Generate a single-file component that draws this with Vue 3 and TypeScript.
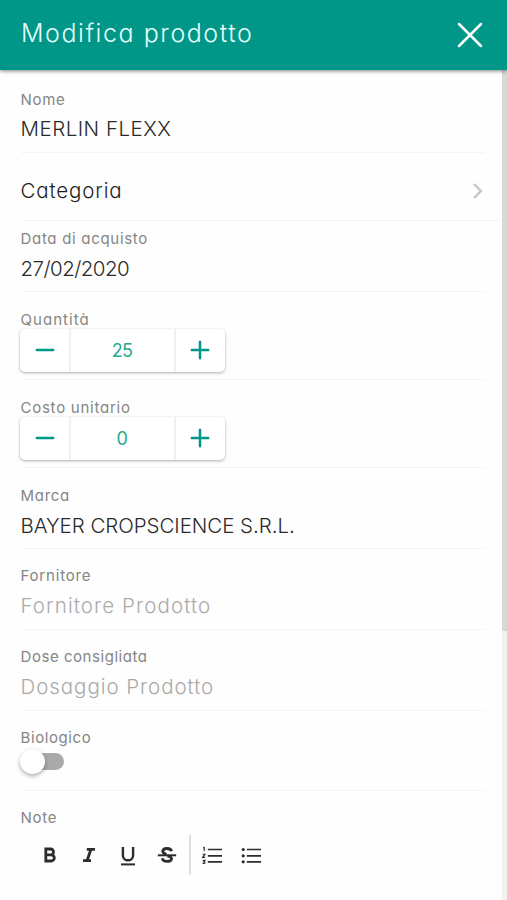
<script setup lang="ts">
import { ref } from 'vue'

interface Counter {
  id: string
  label: string
  value: number
}

const nome = ref('MERLIN FLEXX')
const acquisto = ref('27/02/2020')
const marca = ref('BAYER CROPSCIENCE S.R.L.')
const biologico = ref(false)
const counters = ref<Counter[]>([
  { id: 'quantita', label: 'Quantità', value: 25 },
  { id: 'costo', label: 'Costo unitario', value: 0 },
])

function step(counter: Counter, delta: number): void {
  counter.value = Math.max(0, counter.value + delta)
}
</script>

<template>
  <div class="page">
    <header class="header">
      <h1 class="title">Modifica prodotto</h1>
      <svg class="close" width="26" height="26" viewBox="0 0 26 26">
        <path d="M2 2L24 24M24 2L2 24" />
      </svg>
    </header>

    <div class="body">
      <main class="form">
        <section class="field nome">
          <div class="label">Nome</div>
          <div class="value v-nome">{{ nome }}</div>
        </section>

        <section class="field categoria">
          <div class="value v-categoria">Categoria</div>
          <svg class="chevron" width="12" height="18" viewBox="0 0 12 18">
            <path d="M2 2L9 9L2 16" />
          </svg>
        </section>

        <section class="field data">
          <div class="label">Data di acquisto</div>
          <div class="value v-data">{{ acquisto }}</div>
        </section>

        <section v-for="c in counters" :key="c.id" class="field counter">
          <div class="label" :class="'l-' + c.id">{{ c.label }}</div>
          <div class="stepper">
            <button class="step" @click="step(c, -1)">
              <svg width="20" height="20" viewBox="0 0 20 20"><path d="M1.8 10H18.2" /></svg>
            </button>
            <div class="count">{{ c.value }}</div>
            <button class="step" @click="step(c, 1)">
              <svg width="20" height="20" viewBox="0 0 20 20"><path d="M1.8 10H18.2M10 1.8V18.2" /></svg>
            </button>
          </div>
        </section>

        <section class="field marca">
          <div class="label">Marca</div>
          <div class="value v-marca">{{ marca }}</div>
        </section>

        <section class="field fornitore">
          <div class="label l-fornitore">Fornitore</div>
          <div class="value hint v-fornitore">Fornitore Prodotto</div>
        </section>

        <section class="field dose">
          <div class="label l-dose">Dose consigliata</div>
          <div class="value hint">Dosaggio Prodotto</div>
        </section>

        <section class="field bio">
          <div class="label l-bio">Biologico</div>
          <div class="toggle" :class="{ on: biologico }" @click="biologico = !biologico">
            <span class="knob"></span>
          </div>
        </section>

        <section class="field note">
          <div class="label">Note</div>
          <div class="toolbar">
            <svg class="tool" width="24" height="24" viewBox="0 0 24 24">
              <path class="bold" d="M7.8 6H12.6A2.9 2.9 0 0 1 12.6 11.8H7.8ZM7.8 11.8H13.2A3.1 3.1 0 0 1 13.2 18H7.8Z" />
            </svg>
            <svg class="tool" width="24" height="24" viewBox="0 0 24 24">
              <path class="bold" d="M9.8 6.3H18M6 17.7H14M13.9 6.5L10.1 17.5" />
            </svg>
            <svg class="tool" width="24" height="24" viewBox="0 0 24 24">
              <path class="under" d="M6.9 4V12.2A5.1 5.1 0 0 0 17.1 12.2V4" />
              <path d="M5 21.4H19" />
            </svg>
            <svg class="tool" width="24" height="24" viewBox="0 0 24 24">
              <path class="bold" d="M16.5 8.2C15.6 4.4 7.8 4.8 7.8 8.3C7.8 9.8 9.3 10.8 11.5 11.4M12.5 12.8C15 13.5 16.6 14 16.6 15.8C16.6 19.2 8.2 19.6 7.3 15.2" />
              <path d="M2.8 12.3H21.2" />
            </svg>
            <span class="divider"></span>
            <svg class="tool" width="24" height="24" viewBox="0 0 24 24">
              <path class="bar" d="M7.8 6.5H22M7.8 12.8H22M7.8 18.8H22" />
              <path class="num" d="M3 5L4.2 4.4V8.2M2.6 11.2H5L2.6 14.4H5.2M2.6 17.2H5L3.8 18.6C5.6 18.8 5.2 20.4 4.2 20.4H2.6" />
            </svg>
            <svg class="tool" width="24" height="24" viewBox="0 0 24 24">
              <path class="bar" d="M7.8 6.5H22M7.8 12.8H22M7.8 18.8H22" />
              <circle cx="4.2" cy="6.5" r="1.6" />
              <circle cx="4.2" cy="12.8" r="1.6" />
              <circle cx="4.2" cy="18.8" r="1.6" />
            </svg>
          </div>
        </section>
      </main>
      <aside class="scrollbar"><div class="thumb"></div></aside>
    </div>
  </div>
</template>

<style>
body {
  margin: 0;
  background: #fefefe;
}
</style>

<style scoped>
.page {
  width: 507px;
  height: 900px;
  overflow: hidden;
  display: flex;
  flex-direction: column;
  background: #fefefe;
  font-family: Inter, 'Open Sans', sans-serif;
  font-feature-settings: 'cv11' 1;
  font-weight: 300;
}
.header {
  position: relative;
  z-index: 1;
  flex: none;
  box-sizing: border-box;
  height: 69.5px;
  padding: 0 24px 0 21px;
  display: flex;
  align-items: center;
  justify-content: space-between;
  background: #009688;
  box-shadow: 0 1px 4px rgba(0, 0, 0, 0.5);
}
.title {
  margin: 0;
  padding-bottom: 3px;
  font-size: 25px;
  font-weight: 350;
  line-height: 32px;
  letter-spacing: 1.55px;
  color: #e6fffb;
  white-space: nowrap;
}
.close {
  fill: none;
  stroke: #fff;
  stroke-width: 2.5;
  stroke-linecap: round;
}
.body {
  flex: 1;
  min-height: 0;
  display: flex;
}
.form {
  flex: 1;
  padding: 0 0 0 20.5px;
}
.scrollbar {
  flex: none;
  width: 5px;
  background: #f1f1f1;
}
.thumb {
  height: 561px;
  background: #d8d8d8;
}
.field {
  box-sizing: border-box;
  height: 81px;
  margin-right: 18px;
  padding-top: 17.5px;
  border-bottom: 1px solid #f4f4f4;
}
.label {
  height: 20px;
  font-size: 15px;
  font-weight: 400;
  line-height: 20px;
  letter-spacing: 0.7px;
  color: #858585;
  white-space: nowrap;
}
.l-quantita { letter-spacing: 1.05px; }
.l-costo { letter-spacing: 0.75px; }
.l-fornitore { letter-spacing: 0.8px; }
.l-dose { letter-spacing: 0.55px; }
.l-bio { letter-spacing: 0.6px; }
.value {
  margin-top: 6px;
  font-size: 20.5px;
  line-height: 28px;
  color: #2a2a2a;
  white-space: nowrap;
}
.hint {
  letter-spacing: 0.95px;
  color: #aaa;
}
.v-fornitore { letter-spacing: 1.1px; }
.v-nome { letter-spacing: 0.5px; }
.v-data { letter-spacing: -0.55px; }
.v-marca { letter-spacing: -0.05px; }
.nome { height: 83.5px; padding-top: 20.5px; }
.nome .value { margin-top: 5px; }
.categoria {
  height: 68px;
  margin-right: 0;
  padding: 8px 18px 0 0;
  display: flex;
  align-items: center;
  justify-content: space-between;
}
.categoria .value {
  margin: 0;
  font-weight: 350;
  letter-spacing: 0.85px;
  color: #1c1c1c;
}
.chevron {
  fill: none;
  stroke: #c4c4c4;
  stroke-width: 2.3;
}
.data { height: 71px; padding-top: 8px; }
.counter { height: 88px; }
.marca { height: 80.5px; }
.bio { height: 80.5px; }
.note { border: 0; padding-top: 16.5px; }

.stepper {
  box-sizing: border-box;
  width: 205px;
  height: 43px;
  margin: -1px 0 0 -0.5px;
  display: flex;
  border-radius: 5px;
  background: #fff;
  box-shadow: 0 1px 3px rgba(0, 0, 0, 0.32);
}
.step {
  box-sizing: border-box;
  width: 49px;
  padding: 0;
  border: 0;
  background: none;
  display: flex;
  align-items: center;
  justify-content: center;
}
.step:last-child { padding-right: 1px; }
.step svg {
  fill: none;
  stroke: #009688;
  stroke-width: 2.5;
  stroke-linecap: round;
}
.count {
  box-sizing: border-box;
  width: 107px;
  padding-right: 1px;
  border-left: 2px solid #f0f0f0;
  border-right: 2px solid #f0f0f0;
  font-size: 18px;
  font-weight: 400;
  line-height: 43px;
  letter-spacing: -0.6px;
  text-align: center;
  color: #26a88f;
}
.toggle {
  position: relative;
  width: 31px;
  height: 17px;
  margin: 5px 0 0 12.5px;
  border-radius: 9px;
  background: #a9a9a9;
}
.knob {
  position: absolute;
  left: -13px;
  top: -4px;
  width: 25px;
  height: 25px;
  border-radius: 50%;
  background: #fff;
  box-shadow: 0 2px 4px rgba(0, 0, 0, 0.32);
}
.on .knob { left: 11px; }
.toolbar {
  display: flex;
  align-items: center;
  height: 40px;
  margin-top: 7.5px;
  padding-left: 17.5px;
  gap: 15px;
}
.tool {
  flex: none;
  fill: none;
  stroke: #2c2c2c;
  stroke-width: 2;
}
.tool circle { fill: #2c2c2c; stroke: none; }
.bold { stroke-width: 2.8; }
.under { stroke-width: 2.4; }
.bar { stroke-width: 1.7; }
.num { stroke-width: 1.1; }
.divider {
  width: 1.5px;
  height: 40px;
  margin: 0 -6px 0 -5px;
  background: #ddd;
}
</style>
